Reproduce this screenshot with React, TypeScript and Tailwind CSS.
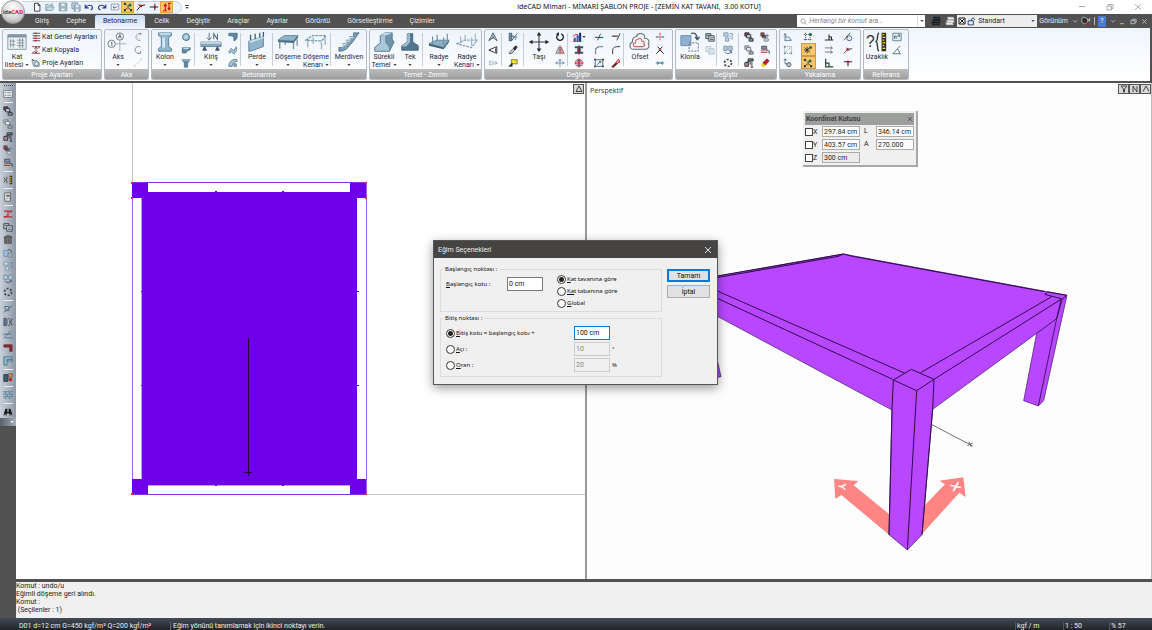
import React from "react";
import type { ReactNode } from "react";

const K = "#222a33";
const S = "#5f8aa6";
const R = "#c0161c";

const icons: Record<string, ReactNode> = {
  new: <path d="M3 1.500h4.500L9.500 4v7h-6.500zM7.300 1.500v2.700h2.200" fill="#fff" stroke={K} />,
  open: <path d="M1 10V3h3l1 1h4v2M1 10l2-4h8l-2 4zM7 2.500h3" fill="#cfe0ea" stroke="#7c98a8" />,
  save: <><path d="M1.500 1.500h9v9h-9z" fill="#a9bfcc" stroke="#7390a3" /><path d="M3.500 1.500h5v3.500h-5zM3.500 7.500h5v3h-5z" fill="#f3f7f9" stroke="#7390a3" strokeWidth=".6" /></>,
  saveall: <><path d="M1 1h7v7H1z" fill="#c2d2dc" stroke="#7390a3" /><path d="M4 4h7v7H4z" fill="#a9bfcc" stroke="#7390a3" /><path d="M6 4h3v2H6zM6 9h3v2H6z" fill="#fff" /></>,
  undo: <path d="M1.500 3v4h4M2 6.500C4 3.500 9 3 10 6c.5 1.500-.5 3-2 3.500" fill="none" stroke="#2a2f96" strokeWidth="1.300" />,
  redo: <path d="M10.500 3v4h-4M10 6.500C8 3.500 3 3 2 6c-.5 1.500.5 3 2 3.500" fill="none" stroke="#2a2f96" strokeWidth="1.300" />,
  refresh: <><path d="M1.500 2.500h9v7h-9z" fill="#fff" stroke="#7c8fa8" /><path d="M3.500 6.500l2-2M3.500 6.500l2 1.500M4 6.500h3.500L9 4.500" stroke="#4c5a9a" fill="none" /></>,
  nodes: <><path d="M2 2l4 3 4-3M6 5v5M2 10l4-4 4 4" stroke={K} fill="none" strokeDasharray="1.500 1" /><path d="M1 1h2.500v2.500H1zM1 8.500h2.500V11H1zM8.500 8.500H11V11H8.500z" fill="#2c3f2e" /><circle cx="8.500" cy="3.500" r="1.800" fill="#1c7048" /></>,
  perp: <><path d="M1 10l5-5.500 5-1M3 3l4 3" stroke={K} fill="none" strokeWidth="1.200" /><circle cx="6" cy="4.500" r="1.500" fill={R} /></>,
  mid: <><path d="M1 6h10M7 2v8" stroke={K} strokeWidth="1.200" /><circle cx="7" cy="6" r="1.500" fill={R} /></>,
  near: <><path d="M1 10l5-5 5-.5M4 3.500l4 3" stroke={K} fill="none" /><circle cx="5.500" cy="5.500" r="1.500" fill={R} /></>,
  ortho: <path d="M4 11V3M8.500 1v8M2.500 5L4 2.500 5.500 5M7 7l1.500 2.500L10 7M1 10.500h5M7 1.500h4" stroke={R} fill="none" strokeWidth="1.300" />,
  lines: <><path d="M2 1.500h9M2 4.500h9M2 7.500h9M2 10.500h9" stroke="#5b6066" strokeWidth="1.300" /><path d="M4 1.500h3M4 4.500h3M4 7.500h3M4 10.500h3" stroke={R} strokeWidth="1.300" /></>,
  story: <path d="M1 2h10M6 2v8M2 10h9M1 10l3-2M11 2L8 4M4 4.500l2-2 2 2M4 7.500l2 2 2-2" stroke="#8a3038" fill="none" />,
  project: <><path d="M1 3h6l3 3v4H3z" fill="#d6e2ea" stroke="#7491a2" /><circle cx="6.500" cy="7" r="2.500" fill="#e3edf3" stroke="#516d7e" /><path d="M1 1l3 3" stroke={K} /></>,
  axarc: <><path d="M9 2A4.200 4.200 0 1 0 9 10" fill="none" stroke="#8b98a2" /><path d="M5 6l4-4M5 6l4 4" stroke="#9aa7b0" strokeWidth=".7" strokeDasharray="1 1" /><circle cx="9" cy="2" r="1" fill="#64727e" /></>,
  axcurve: <path d="M9 2.500C5 0 1 4 3 8c1 2 4 3 6 1.500M9 7.500v2.500H6.500" fill="none" stroke="#717f8a" />,
  axline: <path d="M1 10l9-8M2 10h1M9 1h2" stroke="#b5bec5" strokeDasharray="3 1.500" />,
  circle: <><circle cx="6" cy="6" r="4" fill="#a9cade" stroke="#567a93" strokeWidth="1.300" /><path d="M4 8l4-4" stroke="#e4f0f7" /></>,
  poly: <><path d="M1.500 3h9.500v3L8 6.500 6 9.500H1.500z" fill={S} stroke="#3a5566" strokeWidth=".7" /><path d="M1.500 3h9.500L8 5H4z" fill="#bcd8e8" /></>,
  funnel: <><path d="M1 2h10L8 6v5H4V6z" fill={S} stroke="#3a5566" strokeWidth=".7" /><path d="M1.500 2h9v1h-9z" fill="#c4dce8" /></>,
  beamL: <path d="M1 1.500h10v4c0 3-2 5-4 5V7C7 5 5 4.500 1 4.500z" fill={S} stroke="#2f4e62" strokeWidth=".7" />,
  beamS: <path d="M1 8l3-4 3 3 3-5v5l-3 4-3-3-2 2z" fill="#a8c6d8" stroke="#48697f" strokeWidth=".8" />,
  beamC: <path d="M1 10C1 5 4 1.500 10 1.500L11 4C7 4 5 7 5 10zM7 7h3v3H7z" fill="#a8c6d8" stroke="#34556a" strokeWidth=".8" />,
  tri: <path d="M1 10.500L6 1l5 9.500-5-3.800zM3 8l5-2M6 3v4" fill="none" stroke="#365064" strokeWidth="1" />,
  eye: <><path d="M10.500 2L1 6l9.500 4z" fill="#fff" stroke="#333" strokeWidth="1.200" /><path d="M9 4v4" stroke="#333" /></>,
  spray: <path d="M1 4h3M1 6h3M1 8h3M5 6h6M9 4l2 2-2 2M5 3l2 2M5 9l2-2" stroke="#8ca0b4" fill="none" />,
  hatch: <><path d="M1.500 1.500v9h3v-9zM4.500 10L11 2M6 6h5M4 5h3" fill="#7895ab" stroke="#33506a" strokeWidth="1" /><circle cx="9" cy="8.500" r="1" fill={S} /></>,
  dropper: <><path d="M1.500 10.500l1-2.500 4-4 2 2-4 4z" fill="#c0cdd5" stroke={K} strokeWidth=".8" /><path d="M6.500 3.500l3-2.500L11 2.500 8.500 6z" fill={K} stroke={K} /></>,
  tag: <><path d="M4 2h7v5H4z" fill="#f4e51a" stroke="#333" strokeWidth=".7" /><path d="M1 10l4-4v4z" fill={K} stroke={K} strokeWidth=".7" /></>,
  rotate: <><path d="M7.500 2.200A4 4 0 1 1 4 2.500" fill="none" stroke="#16191c" strokeWidth="1.500" /><path d="M4.500 0v5L1.500 2.500z" fill="#16191c" /></>,
  mirror: <><path d="M5 2v8H1z" fill="#cfd6da" stroke="#494f54" strokeWidth=".8" /><path d="M7 2v8h4z" fill="#e8b7b5" stroke="#6b3336" strokeWidth=".8" /><path d="M6 0v12" stroke={R} strokeWidth=".6" /></>,
  stretch: <path d="M1 6h10M6 1v10M4 4l2-2 2 2M3 4.500L1 6l2 1.500M9 4.500L11 6 9 7.500" stroke="#5f87a4" fill="none" />,
  bars: <><path d="M2 7h2.500v4H2zM5.500 4H8v7H5.500z" fill="#3b4bb0" /><path d="M8.500 1H11v10H8.500z" fill="#242a6a" /><path d="M1 5l3-2h3M1 11.500h10" stroke={R} fill="none" /></>,
  ibeam: <><path d="M1 1.500h10v2.500H8v4h3v2.500H1V8h3V4H1z" fill="#2f5164" /><path d="M6 0v12M4 6h4" stroke={R} strokeWidth="1.100" /></>,
  globe: <><circle cx="6" cy="6" r="4.500" fill="#f3dede" stroke={R} strokeDasharray="2 1" /><path d="M6 1v10M1 6h10" stroke={R} strokeWidth="1.400" /><path d="M3 8.500h6M3 3.500h6" stroke="#2a3f92" /></>,
  trim: <><path d="M1 6.500h10M8 2L4 10" stroke={K} /><path d="M6 6.500h5" stroke={R} strokeWidth="1.300" /></>,
  extend: <><path d="M1 5h8M11 1.500L7 10" stroke={K} /><path d="M2 5h5" stroke={R} /></>,
  fillet: <path d="M2 11V5.500C2 3 4 2 11 2M2 5l3-3" fill="none" stroke="#4c5960" />,
  chamfer: <path d="M2 11V6C2 3.500 4.500 2 7 2h4" fill="none" stroke="#3d474e" strokeWidth="1.200" />,
  scale: <><path d="M1.500 2h9v8h-9z" fill="#eef3f7" stroke="#42596b" /><path d="M4 8l4-4M6 4h2v2" fill="none" stroke="#42596b" /><path d="M0 1h2.500v2H0zM9.500 1H12v2H9.500zM0 9h2.500v2H0zM9.500 9H12v2H9.500z" fill="#42596b" /></>,
  wand: <><path d="M1 10.500l5-5 1.500 1.500-5 4.500z" fill="#7e1116" stroke="#5b1014" strokeWidth=".8" /><path d="M6 5l3-3 1.500 1.500-3 3.500zM9 1v1.500M11 5H9.500" stroke={R} fill="#d8b3b2" /></>,
  burst: <><path d="M1 6h3.500M7.500 6H11" stroke={K} /><path d="M6 1v3M6 8v2" stroke={R} /><circle cx="6" cy="6" r="1" fill={R} /></>,
  cross: <><path d="M1.500 10.500L6 6l4.500 4.500M3 2l3 3 3-3" stroke={K} fill="none" strokeWidth="1.200" /><path d="M4 6h4" stroke={R} strokeWidth="1.300" /></>,
  join: <><path d="M1 6h10" stroke="#32626d" /><path d="M3 4l2 2-2 2M9 4L7 6l2 2" fill="#3c8a98" stroke="#3c8a98" /></>,
  copy: <><path d="M1 2h6v6H1z" fill="#c5cdd4" stroke="#29333b" /><path d="M4.500 4.500H11v6.500H4.500z" fill="#dde4ea" stroke="#29333b" /><path d="M6 7h4M6 9h4M2 4h3" stroke="#29333b" strokeWidth=".8" /></>,
  copyd: <><path d="M1 2h6v6H1z" fill="#e2eaf0" stroke="#b3c2cd" /><path d="M4.500 4.500H11v6.500H4.500z" fill="#d8e3ea" stroke="#b3c2cd" /></>,
  arr1: <><path d="M1 1h5v4H1zM3 7h4v4H3z" fill="#c4d8e6" stroke="#7894a8" /><path d="M8 2h3v6M9 7l2 2M7 4l2 2" stroke="#6a879c" fill="none" /></>,
  arr2: <><path d="M1 1.500h4v5H1zM7 1.500h4v5H7z" fill="#b8d0e0" stroke="#6a8aa2" /><path d="M2 8c2 3 6 3 8 0M8 8h2v2" fill="none" stroke="#3b566c" /></>,
  ring: <circle cx="6" cy="6" r="4.200" fill="none" stroke="#3d4347" strokeWidth="2" strokeDasharray="2.400 2" />,
  stk1: <><path d="M1 1h5v4H1z" fill="#8f474d" stroke={K} /><path d="M3 3h5v4H3z" fill="#b9c4cb" stroke={K} /><path d="M6 8h5v3H6zM8.500 5.500V8" fill="#8d99a2" stroke={K} /></>,
  stk2: <><path d="M1 1h5v4H1z" fill="#c2c9cd" stroke="#6c767c" /><path d="M3 3h5v4H3z" fill="#e4e8ea" stroke="#6c767c" /><path d="M6 8h5v3H6zM8.500 5.500V8" fill="#a9b2b8" stroke="#5d666c" /></>,
  stk3: <><path d="M5 1h6v2.500H5z" fill="#75828c" stroke={K} /><path d="M1 5.500h4.500V10H1z" fill="#c3828a" stroke={K} /><path d="M3 4.500h4.500V8" fill="none" stroke={K} /><path d="M9.500 4v7M8 11h3" stroke={K} fill="none" /></>,
  stk4: <><path d="M1 1h4v4H1zM3 4h4v3H3z" fill="#9b4a4f" stroke="#3a3a3a" strokeWidth=".8" /><path d="M8.500 2v5M6 4.500h5" stroke="#4a7c96" /><path d="M5 8h5v3H5z" fill="#cfd8de" stroke="#77858f" /></>,
  stk5: <><path d="M2 1.500h6V5H2z" fill="#7d95bb" stroke="#444" /><path d="M1 7h8M1 9h8" stroke="#93452e" /><path d="M8 5.500l3 2v3" stroke={K} fill="none" /></>,
  eraser: <><path d="M1 8l3-3 3 3-2 3H3z" fill="#f2d321" /><path d="M3.500 5.500L8.500 1 11 3.500 6.500 8.500z" fill="#c2181e" stroke="#7c0c10" strokeWidth=".7" /></>,
  sn1: <path d="M2.500 11V2M1 4l1.500-2L4 4M2.500 6H7l3 4H2.500" fill="none" stroke="#3e6a80" />,
  sn2: <><path d="M2 2h8v8H2zM2 10l8-8" fill="none" stroke="#7f99aa" strokeDasharray="1.500 1" /><path d="M1 1h2v2H1zM9 9h2v2H9zM1 9h2v2H1z" fill="#68899e" /></>,
  sn3: <><path d="M2.500 1v6h3M1 3l1.500-2L4 3" stroke="#3e6a80" fill="none" /><circle cx="7" cy="8" r="2.500" fill="#b9cad6" stroke="#3a4e5c" /></>,
  grid: <><path d="M1 3h10M1 9h10M3 1v10M8.500 1v10" stroke="#3b4a44" strokeDasharray="1.500 1" /><circle cx="9" cy="3" r="1.800" fill="#1c7048" /></>,
  star: <><path d="M2 3l6 6M2 9l6-6M5 2v8M1 6h7" stroke={K} /><circle cx="9" cy="3" r="1.800" fill="#1c7048" /></>,
  base: <path d="M1 9.500h10M6 3v6M6 6h3v3" stroke={K} fill="none" strokeWidth="1.300" />,
  arrows: <path d="M1 3.500h9M8 1.500l2 2-2 2M1 8.500h9M8 6.500l2 2-2 2" stroke="#555f66" fill="none" />,
  corner: <path d="M2 1v9.500h9M2 6h4v4" stroke="#2a4a42" fill="none" strokeWidth="1.500" />,
  tangent: <><circle cx="7.500" cy="7.500" r="3" fill="none" stroke="#3a5080" /><path d="M1 10L8.500 1" stroke="#3a5080" /><circle cx="5" cy="5.500" r="1" fill={R} /></>,
  tee: <><path d="M1 4.500h10M6 4.500V10" stroke={K} strokeWidth="1.300" /><circle cx="6" cy="4.500" r="1.500" fill={R} /></>,
  dim: <><path d="M1 1.500h10v9H1z" fill="#e4edf3" stroke="#54738a" /><path d="M3 8V5h2v3M6.500 6L9 3.500M7 3.500h2v2" stroke="#3c5b70" fill="none" /></>,
  angle: <path d="M1 10.500h10M1 10.500L10 1M6 5c2 1 3 3 3 5" fill="none" stroke="#44606f" />,
  list: <><path d="M.5 2h11v8H.5z" fill="#f2f4f5" stroke="#6b737c" /><path d="M2 4.500h2M2 7.500h2" stroke="#3a5e94" /><path d="M5 4.500h5M5 7.500h5" stroke="#777" /></>,
  ruler: <><path d="M8 1h3v10H8z" fill="#3b351c" /><path d="M8 3h2M8 5h2M8 7h2M8 9h2" stroke="#e7cf2d" /><path d="M1 3l2 3-2 3M4 2c2 2 0 3 0 4s2 2 0 4" stroke="#333" fill="none" /></>,
  sheet: <><path d="M2 1h7v10H2z" fill="#e9ebec" stroke="#555" /><path d="M4 3h4v3H4z" fill="#6f777c" /><path d="M4 8h1.500M7 8h1.500" stroke="#444" /></>,
  redh: <path d="M1 2.500h10M1 9.500h10M6 2.500v7M1 10l4-2M11 2L8 5" stroke={R} fill="none" strokeWidth="1.200" />,
  bucket: <path d="M2 3h8v7H2zM1 3l3-2h5l2 2M4 5v4M7 5v4" fill="#777" stroke="#4b4b4b" />,
  clone: <><path d="M1 3h5v7H1z" fill="#9fc0d8" stroke="#6b91ad" /><path d="M6 6h5v5H6z" fill="none" stroke="#666" strokeDasharray="1 1" /><path d="M6 2c3-1 4 1 4 3" stroke="#314a62" fill="none" /></>,
  slope: <path d="M1 10L11 2M2 3h5v5H3z" fill="#a9c4d8" stroke="#42647c" />,
  panels: <><path d="M1 1.500h3v9H1z" fill="#5a7d96" stroke={K} strokeWidth=".6" /><path d="M6 2h2v8H6z" fill="#e8eef2" stroke={K} strokeWidth=".7" /><path d="M11 2L9 6l2 4" stroke={K} fill="none" /></>,
  split: <path d="M1 10L9 1M0 5h11M3 9.500h9" stroke="#40708c" fill="none" />,
  redl: <path d="M1 2h10v8H8V5H1z" fill="#8d2b30" stroke="#5d1519" strokeWidth=".6" />,
  bluel: <path d="M1 1h10v3H5v7H1zM5 5l3 3M7 5h4v3" fill="#8db9ca" stroke="#2d647c" strokeWidth=".8" />,
  boxes: <><path d="M1 2h5v8H1z" fill="#3f6074" stroke={K} /><path d="M7 1h4v4H7z" fill="#dca53a" stroke={K} strokeWidth=".6" /><circle cx="9" cy="8" r="2" fill={R} /></>,
  brick: <path d="M0 2h12M0 5h12M0 8h12M3 2v3M8 2v3M5 5v3M10 5v3M3 8v3M8 8v3" stroke="#5f87a4" fill="none" strokeWidth="1.300" />,
  bino: <><path d="M3 2h2.200v4H6.800V2H9l2.500 8H7.500V7.500h-3V10H.5z" fill="#171717" /><circle cx="2.500" cy="9" r=".8" fill="#aaa" /><circle cx="9.500" cy="9" r=".8" fill="#aaa" /></>,
  layers: <path d="M3 1.500h7l1 2.500H4zM2 5h8l1 2.500H3zM1 8h8l1 2.500H2z" fill="#f0f0f0" stroke="#c8c8c8" strokeWidth=".8" />,
  layersd: <path d="M3 1.500h7l1 2.500H4zM2 5h8l1 2.500H3zM1 8h8l1 2.500H2z" fill="#39414b" stroke="#14181c" strokeWidth="1.100" />,
  xbox: <path d="M1.500 1.500h9v9h-9zM3 3l6 6M9 3L3 9" fill="#fff" stroke="#111" strokeWidth="1.500" />,
  lock: <><path d="M1.500 5h7v5.500h-7z" fill="#dfeaf5" stroke="#223a66" strokeWidth="1.200" /><path d="M6 5V3c0-2 4-2 4 0v1" fill="none" stroke="#223a66" strokeWidth="1.200" /></>,
  cam: <><path d="M1 2.500l3-1 4 2v4l-4 2-3-2z" fill="#2c2c2c" stroke="#d9d9d9" strokeWidth=".8" /><path d="M8 5l3-3v5z" fill="#b9b9b9" /><path d="M6 7l3 4" stroke={R} strokeWidth="1.500" /></>,
};

const big: Record<string, ReactNode> = {
  table: <><path d="M2 3h20v16H2z" fill="#eef2f4" stroke="#8296a4" /><path d="M2 3h20v3H2z" fill="#7d95a6" /><path d="M12 9h8M12 12h8M12 15h8M15 7v11M18 7v11M4 10h6M4 14h6M5 8v9M8 8v9" stroke="#7b8d9a" fill="none" strokeWidth=".9" /></>,
  axes: <><circle cx="14" cy="5" r="4" fill="none" stroke="#687680" /><circle cx="5" cy="13" r="4" fill="none" stroke="#687680" /><path d="M9 13h12M14 9v12" stroke="#9aa8b2" /><path d="M12.300 7L14 2.800 15.700 7M13 5.500h2M4.200 12L5.300 11v4.500" stroke="#4d5a64" fill="none" strokeWidth=".9" /></>,
  column: <><path d="M5 1h14v3l-3 2v10l3 2v3H5v-3l3-2V6L5 4z" fill="#8fb6cd" stroke="#5b7e93" /><path d="M9 6h3v11H9z" fill="#d5e8f2" /><path d="M5 1h14l-2 2H7z" fill="#c4dce9" /></>,
  beam: <><path d="M1 11h22v5H1z" fill="#86a9c0" stroke="#4f6f84" strokeWidth=".8" /><path d="M1 11h22v2H1z" fill="#c4d9e5" /><path d="M3 20l2-4 2 4zM17 20l2-4 2 4z" fill="#42566a" stroke="#42566a" /><path d="M10 1v8M7.500 6l2.500 3 2.500-3" fill="none" stroke="#58717f" /><path d="M15 8V2l4 6V2" fill="none" stroke="#4d6674" strokeWidth="1.100" /></>,
  wall: <><path d="M3 10l16-5v11L5 21H3z" fill="#8fb4cb" stroke="#4d7089" strokeWidth=".8" /><path d="M3 10l2 2 14-5V5z" fill="#c6dde9" /><path d="M5 9V3M10 8V2M15 6V1M19 5V0" stroke="#3e5c70" strokeWidth="1.400" /></>,
  slab: <><path d="M3 10v8M18 11v8M22 8v7M9 10v4" stroke="#7f9caf" strokeWidth="1.600" /><path d="M1 9l7-5h15l-5 6z" fill="#8fb3c8" stroke="#54778d" strokeWidth=".8" /><path d="M1 9l17 1 5-6v2l-5 6-17-1z" fill="#4c6c82" /></>,
  slabe: <><path d="M1 9l7-5h15l-5 6z" fill="none" stroke="#7795a8" strokeDasharray="3 1" strokeWidth="1.500" /><path d="M3 10v7M18 11v8M22 7v7M9 6v7" stroke="#9db4c2" strokeWidth="1.500" /></>,
  stair: <><path d="M1 21v-4h4v-4h4V9h4V5h4V1h6l-7 10-7 8-5 2z" fill="#7d9db2" stroke="#486679" strokeWidth=".8" /><path d="M5 17v-3h4M9 13v-3h4M13 9V6h4" stroke="#d0e1eb" fill="none" strokeWidth="1.500" /></>,
  strip: <><path d="M8 4l5-3h8v7l2 3-5 10H2v-4l6-5z" fill="#6e93ab" stroke="#47687e" strokeWidth=".8" /><path d="M8 4h6v7l4 6v4H2v-4l6-5z" fill="#a9c7d9" stroke="#5b7d93" strokeWidth=".8" /><path d="M8 4l5-3h8l-7 3z" fill="#c9dde8" /></>,
  single: <><path d="M9 2h6v9l6 4v5H3v-5l6-4z" fill="#527791" stroke="#365568" strokeWidth=".8" /><path d="M9 2h3v9l-4 5H3v-1l6-4z" fill="#9dbed2" /></>,
  raft: <><path d="M1 13l8-4h14l-6 8z" fill="#8bb0c6" stroke="#4e7189" strokeWidth=".8" /><path d="M1 13l16 4v2L1 15zM17 19l6-8V9l-6 8z" fill="#426075" /><path d="M5 13V5M10 10V3M17 15V6M21 9V2" stroke="#6f8fa3" strokeWidth="1.300" /></>,
  rafte: <><path d="M1 13l8-4h14l-6 8z" fill="none" stroke="#86a3b5" strokeDasharray="3 1" strokeWidth="1.400" /><path d="M5 13V5M10 10V3M17 15V6M21 9V2" stroke="#9fb5c3" strokeWidth="1.300" /></>,
  move: <><path d="M12 3v17M3 11h18" stroke="#32383d" strokeWidth="1.200" /><path d="M12 0l2.500 4h-5zM12 22l2.500-4h-5zM1 11l4-2.500v5zM23 11l-4-2.500v5z" fill="#23282c" /></>,
  offset: <><path d="M5 19C0 19 0 12 4 11 3 7 6 5 8 5c2-5 10-4 9 2 4 0 6 3 4 6 2 3 0 6-3 6z" fill="#f5f6f8" stroke="#616b74" strokeWidth="1.100" /><path d="M7 16c-3 0-3-4 0-4 0-3 2-4 3-4 1-2 4-1 4 2 3 0 3 2 2 3 2 1 1 3-1 3z" fill="#fdf6f6" stroke="#c4666a" strokeWidth="1.200" /></>,
  cloneb: <><path d="M2 4h11v11H2z" fill="#8fb0cf" stroke="#6c8fb2" /><path d="M11 12h10v9H11z" fill="none" stroke="#7b8793" strokeDasharray="2 1.500" strokeWidth="1.300" /><path d="M13 2c4-2 7 1 7 6M17.500 5.500L20 8.500l2.500-3" fill="none" stroke="#3b5069" strokeWidth="1.400" /></>,
  far: <><text x="0" y="17" fontSize="17" fontFamily="Liberation Sans" fill="#333">?</text><path d="M14 1c-3 3 0 7-3 9.500C14 13 11 18 14 21" fill="none" stroke="#333" strokeWidth="1.500" /><path d="M17 1h5v20h-5z" fill="#2d2c22" /><path d="M18 3h2M18 6h3M18 9h2M18 12h3M18 15h2M18 18h3" stroke="#f3dc2c" strokeWidth="1.400" /></>,
};

function Icon({ n }: { n: string }) {
  return <svg viewBox="0 0 12 12" className="size-[10px] shrink-0" aria-hidden="true">{icons[n]}</svg>;
}

function Caret({ color = "#444" }: { color?: string }) {
  return <svg viewBox="0 0 5 3" className="h-[2px] w-[4px] shrink-0" aria-hidden="true"><path d="M0 0h5L2.500 3z" fill={color} /></svg>;
}

function Big({ icon, lines, w, caret = true }: { icon: string; lines: string[]; w: string; caret?: boolean }) {
  const two = lines.length > 1;
  return (
    <button className={`flex shrink-0 flex-col items-center pt-px ${w}`}>
      <svg viewBox="0 0 24 22" className="h-[22px] w-[22px] shrink-0" aria-hidden="true">{big[icon]}</svg>
      <span className="leading-[8px] whitespace-nowrap">{lines[0]}</span>
      <span className="flex h-[8px] items-center gap-[2px] leading-[8px] whitespace-nowrap">
        {two && lines[1]}
        {caret && <Caret />}
      </span>
    </button>
  );
}

function Smalls({ names, w, active = [], caret = false }: { names: string[]; w: string; active?: number[]; caret?: boolean }) {
  return (
    <div className={`flex shrink-0 flex-col items-center ${w}`}>
      {names.map((n, i) => (
        <button
          key={n}
          aria-label={n}
          className={`flex h-[13px] w-[15px] items-center justify-center ${active.includes(i) ? "border border-[#c59a4a] bg-[#fbc56b]" : ""}`}
        >
          <Icon n={n} />
          {caret && i === 0 && <Caret />}
        </button>
      ))}
    </div>
  );
}

function Divider() {
  return <div className="w-[2px] shrink-0 py-[3px]"><div className="h-full w-px bg-[#c5ccd4]" /></div>;
}

function Group({ title, w, children }: { title: string; w: string; children: ReactNode }) {
  return (
    <section className={`flex shrink-0 flex-col overflow-hidden rounded-[2px] border border-[#b4bac2] bg-linear-to-b from-[#eef4fc] to-white ${w}`}>
      <div className="flex h-[40px]">{children}</div>
      <h2 className="h-[10px] bg-linear-to-b from-[#bcbcbc] to-[#9e9e9e] pt-px text-center leading-[10px] text-white">{title}</h2>
    </section>
  );
}

function Ribbon() {
  return (
    <div className="flex h-[53px] shrink-0 gap-[2px] border-r-2 border-[#515151] bg-linear-to-b from-[#f0f5fd] to-white px-[2px] py-px text-[#1e1e3c]">
      <Group title="Proje Ayarları" w="w-[100px]">
        <Big icon="table" lines={["Kat", "listesi"]} w="w-[28px]" />
        <div className="flex flex-col">
          {[["lines", "Kat Genel Ayarları"], ["story", "Kat Kopyala"], ["project", "Proje Ayarları"]].map(([n, t]) => (
            <button key={t} className="flex h-[13px] items-center gap-px whitespace-nowrap"><Icon n={n} />{t}</button>
          ))}
        </div>
      </Group>
      <Group title="Aks" w="w-[45px]">
        <Big icon="axes" lines={["Aks"]} w="w-[26px]" />
        <Smalls names={["axarc", "axcurve", "axline"]} w="w-[14px]" />
      </Group>
      <Group title="Betonarme" w="w-[216px]">
        <Big icon="column" lines={["Kolon"]} w="w-[26px]" />
        <Smalls names={["circle", "poly", "funnel"]} w="w-[16px]" />
        <Divider />
        <Big icon="beam" lines={["Kiriş"]} w="w-[30px]" />
        <Smalls names={["beamL", "beamS", "beamC"]} w="w-[14px]" />
        <Divider />
        <Big icon="wall" lines={["Perde"]} w="w-[30px]" />
        <Divider />
        <Big icon="slab" lines={["Döşeme"]} w="w-[28px]" />
        <Big icon="slabe" lines={["Döşeme", "Kenarı"]} w="w-[28px]" />
        <Divider />
        <Big icon="stair" lines={["Merdiven"]} w="w-[34px]" />
      </Group>
      <Group title="Temel - Zemin" w="w-[113px]">
        <Big icon="strip" lines={["Sürekli", "Temel"]} w="w-[28px]" />
        <Big icon="single" lines={["Tek"]} w="w-[24px]" />
        <Divider />
        <Big icon="raft" lines={["Radye"]} w="w-[30px]" />
        <Big icon="rafte" lines={["Radye", "Kenarı"]} w="w-[26px]" />
      </Group>
      <Group title="Değiştir" w="w-[189px]">
        <Smalls names={["tri", "eye", "spray"]} w="w-[16px]" />
        <Divider />
        <Smalls names={["hatch", "dropper", "tag"]} w="w-[20px]" />
        <Divider />
        <Big icon="move" lines={["Taşı"]} w="w-[28px]" caret={false} />
        <Smalls names={["rotate", "mirror", "stretch"]} w="w-[14px]" />
        <Divider />
        <Smalls names={["bars", "ibeam", "globe"]} w="w-[20px]" caret />
        <Smalls names={["trim", "fillet", "scale"]} w="w-[20px]" />
        <Smalls names={["extend", "chamfer", "wand"]} w="w-[14px]" />
        <Divider />
        <Big icon="offset" lines={["Ofset"]} w="w-[30px]" caret={false} />
        <Smalls names={["burst", "cross", "join"]} w="w-[10px]" />
      </Group>
      <Group title="Değiştir" w="w-[102px]">
        <Big icon="cloneb" lines={["Klonla"]} w="w-[28px]" caret={false} />
        <Smalls names={["copy", "copyd"]} w="w-[12px]" />
        <Divider />
        <Smalls names={["arr1", "arr2", "ring"]} w="w-[20px]" />
        <Divider />
        <Smalls names={["stk1", "stk2", "stk3"]} w="w-[18px]" />
        <Smalls names={["stk4", "stk5", "eraser"]} w="w-[14px]" />
      </Group>
      <Group title="Yakalama" w="w-[82px]">
        <Smalls names={["sn1", "sn2", "sn3"]} w="w-[16px]" />
        <Smalls names={["grid", "star", "nodes"]} w="w-[24px]" active={[1, 2]} />
        <Smalls names={["base", "arrows", "corner"]} w="w-[18px]" />
        <Smalls names={["tangent", "near", "tee"]} w="w-[20px]" />
      </Group>
      <Group title="Referans" w="w-[46px]">
        <Big icon="far" lines={["Uzaklık"]} w="w-[26px]" caret={false} />
        <Smalls names={["dim", "angle"]} w="w-[14px]" />
      </Group>
    </div>
  );
}

function TitleBar() {
  const quick = ["new", "open", "save", "saveall", "undo", "redo", "refresh", "nodes", "perp", "mid", "ortho"];
  return (
    <header className="flex h-[14px] shrink-0 items-center bg-white">
      <div className="ml-[22px] flex h-[13px] items-center rounded-r-full border border-l-0 border-[#c9d3e2] bg-[#edf3fb] pr-[8px] pl-[8px]">
        {quick.map((n) => (
          <button key={n} aria-label={n} className={`flex h-[12px] w-[13px] items-center justify-center ${n === "nodes" || n === "ortho" ? "border border-[#d9a441] bg-[#fbc56b]" : ""}`}><Icon n={n} /></button>
        ))}
      </div>
      <button aria-label="Özelleştir" className="flex w-[10px] flex-col items-center gap-px"><span className="h-px w-[4px] bg-[#555]" /><Caret /></button>
      <h1 className="flex-1 pl-[18px] text-center font-['Noto_Sans',sans-serif] leading-[14px] whitespace-pre text-[#111]">ideCAD Mimari - MİMARİ ŞABLON PROJE - [ZEMİN KAT TAVANI,  3.00 KOTU]</h1>
      <div className="flex">
        {["M1 3.500h6", "M1 3h4.500v4H1zM2.500 3V1.500H7V5.500H5.500", "M1 1l6 6M7 1L1 7"].map((d, i) => (
          <button key={d} aria-label={["Simge durumu", "Geri yükle", "Kapat"][i]} className="flex h-[14px] w-[28px] items-center justify-center">
            <svg viewBox="0 0 8 8" className="size-[8px]"><path d={d} fill="none" stroke="#999" strokeWidth=".8" /></svg>
          </button>
        ))}
      </div>
    </header>
  );
}

function TabBar() {
  const tabs = ["Giriş", "Cephe", "Betonarme", "Celik", "Değiştir", "Araçlar", "Ayarlar", "Görüntü", "Görselleştirme", "Çizimler"];
  return (
    <nav className="flex h-[14px] shrink-0 items-end bg-[#515151] pl-[27px] text-[#e6e6e6]">
      <div className="flex gap-px">
        {tabs.map((t) => (
          <button key={t} className={`h-[13px] px-[8px] leading-[13px] ${t === "Betonarme" ? "rounded-t-[2px] bg-linear-to-b from-[#cddcf5] to-[#eef4fd] text-[#1e1e3c]" : ""}`}>{t}</button>
        ))}
      </div>
      <div className="ml-auto flex h-[14px] items-center">
        <label className="flex h-[12px] w-[128px] items-center bg-white pl-[3px]">
          <svg viewBox="0 0 8 8" className="size-[7px]"><circle cx="3.500" cy="3.500" r="2.500" fill="none" stroke="#888" strokeWidth=".8" /><path d="M5.500 5.500L7.500 7.500" stroke="#888" /></svg>
          <input aria-label="Komut ara" placeholder="Herhangi bir komut ara..." className="min-w-0 flex-1 pl-[2px] italic outline-none placeholder:text-[#888]" />
          <span className="flex h-full w-[8px] items-center justify-center border-l border-[#ddd]"><Caret /></span>
        </label>
        <button aria-label="Katmanlar" className="ml-[4px] flex w-[14px] justify-center"><Icon n="layersd" /></button>
        <button aria-label="Katman listesi" className="flex w-[14px] justify-center"><Icon n="layers" /></button>
        <div className="flex h-[12px] w-[80px] items-center gap-px bg-[#ededed] pl-px text-[#1e1e3c]">
          <svg viewBox="0 0 12 12" className="size-[8px]">{icons.xbox}</svg>
          <svg viewBox="0 0 12 12" className="size-[9px]">{icons.lock}</svg>
          <select aria-label="Katman" className="h-full flex-1 appearance-none pl-px outline-none"><option>Standart</option></select>
          <span className="mr-[2px]"><Caret /></span>
        </div>
        <button className="flex items-center gap-[5px] pl-[2px] whitespace-nowrap">Görünüm<svg viewBox="0 0 6 4" className="h-[3px] w-[4px]"><path d="M0 0l3 3 3-3" fill="none" stroke="#ddd" /></svg></button>
        <button aria-label="Kamera" className="ml-[4px]"><Icon n="cam" /></button>
        <span className="mx-[3px] h-[8px] w-px bg-[#bbb]" />
        <button aria-label="Yardım" className="h-[11px] w-[8px] bg-[#4a78d8] text-white">?</button>
        <svg viewBox="0 0 6 4" className="ml-[5px] h-[3px] w-[4px]"><path d="M0 0l3 3 3-3" fill="none" stroke="#ddd" /></svg>
        <div className="ml-[4px] flex">
          {["M1 6.500h5", "M1 3h4.500v3.500H1zM2.500 3V1.500H7V5H5.500", "M1.500 1.500l5 5M6.500 1.500l-5 5"].map((d, i) => (
            <button key={d} aria-label={["Küçült", "Eski boyut", "Belgeyi kapat"][i]} className="w-[11px]"><svg viewBox="0 0 8 8" className="size-[7px]"><path d={d} fill="none" stroke="#b9c4cf" /></svg></button>
          ))}
        </div>
      </div>
    </nav>
  );
}

const tools = ["list", "|", "stk1", "stk2", "stk3", "stk4", "stk5", "|", "ruler", "|", "sheet", "|", "redh", "copy", "bucket", "clone", "arr1", "arr2", "ring", "|", "slope", "panels", "split", "redl", "bluel", "|", "boxes", "|", "brick", "|", "bino"];

function Toolbar() {
  return (
    <aside className="w-[16px] shrink-0 bg-[#515151]">
      <div className="flex flex-col items-center bg-linear-to-r from-[#c9d0da] to-[#8e98a6] pt-[2px]">
        <span className="mb-px w-[9px] border-t border-dotted border-[#444]" />
        {tools.map((n, i) =>
          n === "|" ? (
            <span key={i} className="flex h-[4px] w-[9px] items-center"><span className="h-px w-full bg-[#eceff2]" /></span>
          ) : (
            <button key={i} aria-label={n} className="flex h-[13px] w-full items-center justify-center"><Icon n={n} /></button>
          ),
        )}
      </div>
      <div className="flex h-[8px] items-center justify-end bg-linear-to-r from-[#59616b] to-[#a3acb8] pr-[2px]"><Caret color="#fff" /></div>
    </aside>
  );
}

function PaneButton({ d, label }: { d: string; label: string }) {
  return (
    <button aria-label={label} className="flex h-[10px] w-[11px] items-center justify-center border border-[#555] bg-[#d9d9d9]">
      <svg viewBox="0 0 8 8" className="size-[8px]"><path d={d} fill="none" stroke="#333" strokeWidth=".9" /></svg>
    </button>
  );
}

function PlanView() {
  const corners = [[132, 183], [350, 183], [132, 479], [350, 479]];
  const reds = [[132, 183], [366, 183], [132, 198], [366, 198], [132, 494], [366, 494]];
  const ticks = [[215, 191], [282, 191], [215, 485], [282, 485], [141, 291], [357, 291], [141, 385], [357, 385]];
  return (
    <section className="relative min-w-0 overflow-hidden bg-white">
      <svg className="block h-full w-full" role="img" aria-label="Kat planı">
        <g transform="translate(-16 -83)">
          <path d="M132.500 83v100M367 494.500h900" stroke="#c8c8c8" />
          <path d="M132.500 182.500h234v312h-234z" fill="#fff" stroke="#a15cf0" />
          <path d="M142 192h215v293H142z" fill="#6d00e8" />
          <path d="M141.500 198v281M148 485.500h202" stroke="#c59cf5" />
          {corners.map(([x, y]) => <rect key={`${x}-${y}`} x={x} y={y} width="16" height={y < 200 ? 15 : 16} fill="#6d00e8" />)}
          <path d="M132 182.500h235M132 494.500h235" stroke="#8a2cf0" />
          {ticks.map(([x, y]) => <rect key={`${x}-${y}`} x={x} y={y} width="2" height="1" fill="#4a00a0" />)}
          {reds.map(([x, y]) => <rect key={`${x}-${y}`} x={x - 1} y={y - 1} width="2" height="2" fill="#f0204a" />)}
          <path d="M248.500 338v138M244 472.500h8" stroke="#1c1038" />
        </g>
      </svg>
      <div className="absolute top-px right-px"><PaneButton d="M1 6.500L4 1l3 5.500z" label="Büyüt" /></div>
    </section>
  );
}

function PerspectiveView() {
  return (
    <section className="relative min-w-0 overflow-hidden border-r border-[#bbb] bg-[#fdfdfd]">
      <svg className="block h-full w-full" role="img" aria-label="Perspektif görünüm">
        <g transform="translate(123 157) scale(.33333)" strokeLinejoin="round">
          <path d="M372 717l73 6-14 13 106 86v62L394 765l-18 12zM760 712l-72 10 17 11-62 64-7 85 112-124 19 13z" fill="#ff8585" />
          <text x="397" y="740" fontSize="32" fontWeight="700" fontFamily="Liberation Sans" fill="#fff" textAnchor="middle" dominantBaseline="central" transform="rotate(95 397 740)">Y</text>
          <text x="736" y="740" fontSize="38" fontWeight="700" fontFamily="Liberation Sans" fill="#fff" textAnchor="middle" dominantBaseline="central" transform="rotate(65 736 740)">X</text>
          <path d="M-20 116L400 42l671 124-70 316-16 16-44-16 39-202-312 228-32 376-44 46-55-46 9-374L22 229l-42-21z" fill="#b847ff" stroke="#3b1160" strokeWidth="2" />
          <path d="M0 300l24 70 9 40-33 6z" fill="#b847ff" stroke="#3b1160" strokeWidth="2" />
          <g fill="none" stroke="#2e0b4c" strokeWidth="3">
            <path d="M-20 120L385 49l15-7 28 7 576 106M22 108L400 42M1015 156l56 10-14 11-53-14 11-8" />
            <path d="M1025 170L632 398M1053 178L672 418M22 153l561 246M22 175l526 243" />
            <path d="M604 388l68 30-52 34-70-32zM550 420l-4 90-9 374M620 452l-28 478M672 418l-4 90-32 376" />
            <path d="M1057 177l-17 59-55 262M1053 178l-13 58-60 44" strokeWidth="2.500" />
          </g>
          <path d="M664 553l124 65M772 617l16-8M776 605l8 16" stroke="#555" strokeWidth="2.500" fill="none" />
        </g>
      </svg>
      <h2 className="absolute top-[3px] left-[3px] font-['Noto_Sans',sans-serif] leading-[9px] text-[#444]">Perspektif</h2>
      <div className="absolute top-px right-0 flex">
        <PaneButton d="M1 1h6L4.500 4v3h-1V4z" label="Süz" />
        <PaneButton d="M2 7V1l4 6V1" label="Kuzey" />
        <PaneButton d="M1 6.500L4 1l3 5.500" label="Büyüt" />
      </div>
    </section>
  );
}

function Coordinates() {
  const field = "h-[11px] w-full min-w-0 border border-[#aaa] px-px leading-[9px] outline-none";
  const rows: [string, string, string, string][] = [["X", "297.84 cm", "L", "346.14 cm"], ["Y", "403.57 cm", "A", "270.000"], ["Z", "300 cm", "", ""]];
  return (
    <section className="absolute top-[111px] left-[803px] border-r-2 border-b-2 border-[#a8a8a8] bg-[#f0f0f0] p-[2px] text-[#222]">
      <header className="flex h-[12px] items-center justify-between bg-[#9c9f9c] px-px font-bold text-[#444]">
        <span>Koordinat Kutusu</span>
        <button aria-label="Kapat"><svg viewBox="0 0 8 8" className="size-[6px]"><path d="M1 1l6 6M7 1L1 7" stroke="#444" /></svg></button>
      </header>
      <div className="mt-px grid grid-cols-[17px_38px_16px_38px] gap-y-[2px]">
        {rows.map(([a, v, b, u]) => (
          <React.Fragment key={a}>
            <label className="flex items-center leading-[8px]"><input type="checkbox" className="size-[8px] appearance-none border border-[#444] bg-white" />{a}</label>
            <input aria-label={a} defaultValue={v} disabled={a === "Z"} className={`${field} ${a === "Z" ? "bg-[#ececec]" : "bg-white"}`} />
            {b && <span className="pl-[4px] leading-[11px]">{b}</span>}
            {b && <input aria-label={b} defaultValue={u} className={`${field} bg-white`} />}
          </React.Fragment>
        ))}
      </div>
    </section>
  );
}

function Radio({ name, checked, hot, children }: { name: string; checked?: boolean; hot: string; children: ReactNode }) {
  return (
    <label className="flex h-[12px] items-center gap-px whitespace-nowrap">
      <input type="radio" name={name} defaultChecked={checked} className="size-[9px] shrink-0 appearance-none rounded-full border border-[#333] bg-white checked:bg-[radial-gradient(circle,#222_0_2px,#fff_3px)]" />
      <span><u>{hot}</u>{children}</span>
    </label>
  );
}

function SlopeDialog() {
  const input = "h-[14px] w-[36px] border px-px pb-px text-[7px] leading-[10px] outline-none font-['Roboto',sans-serif]";
  return (
    <div role="dialog" aria-label="Eğim Seçenekleri" className="absolute top-[240px] left-[433px] w-[285px] border border-[#555] bg-[#f0f0f0] text-[#111] shadow-[0_3px_10px_rgba(0,0,0,0.4)]">
      <header className="flex h-[17px] items-center justify-between bg-[#454442] pr-[5px] pl-[4px] text-[#eee]">
        <span>Eğim Seçenekleri</span>
        <button aria-label="Kapat"><svg viewBox="0 0 8 8" className="size-[8px]"><path d="M1 1l6 6M7 1L1 7" stroke="#ddd" /></svg></button>
      </header>
      <form className="flex gap-[5px] pt-[7px] pr-[7px] pb-[7px] pl-[6px]">
        <div className="flex w-[222px] flex-col gap-[2px] font-['Noto_Sans',sans-serif] text-[6px] leading-[8px]">
          <fieldset className="h-[47px] border border-[#dcdcdc]">
            <legend className="ml-[2px] px-[2px] leading-[8px]">Başlangıç noktası :</legend>
            <div className="flex">
              <label htmlFor="startLevel" className="w-[66px] shrink-0 pt-[7px] pl-[5px]"><u>B</u>aşlangıç kotu :</label>
              <div className="pt-[4px]"><input id="startLevel" defaultValue="0 cm" className={`${input} border-[#777] bg-white`} /></div>
              <div className="ml-[14px] flex flex-col">
                <Radio name="start" checked hot="K">at tavanına göre</Radio>
                <Radio name="start" hot="Ka">t tabanına göre</Radio>
                <Radio name="start" hot="G">lobal</Radio>
              </div>
            </div>
          </fieldset>
          <fieldset className="h-[63px] border border-[#dcdcdc]">
            <legend className="ml-[2px] px-[2px] leading-[8px]">Bitiş noktası :</legend>
            <div className="grid grid-cols-[128px_36px_1fr] items-center gap-y-[2px] pt-[4px] pl-[5px]">
              <Radio name="end" checked hot="B">itiş kotu = başlangıç kotu +</Radio>
              <input aria-label="Bitiş kotu" defaultValue="100 cm" autoFocus className={`${input} border-[#0a78d6] bg-white`} />
              <span />
              <Radio name="end" hot="A">çı :</Radio>
              <input aria-label="Açı" disabled defaultValue="10" className={`${input} border-[#ccc] text-[#888]`} />
              <span className="pl-[2px]">°</span>
              <Radio name="end" hot="O">ran :</Radio>
              <input aria-label="Oran" disabled defaultValue="20" className={`${input} border-[#ccc] text-[#888]`} />
              <span className="pl-[2px]">%</span>
            </div>
          </fieldset>
        </div>
        <div className="flex flex-1 flex-col gap-[3px] pt-[4px]">
          <button type="button" className="h-[13px] border-2 border-[#0a78d6] bg-[#e1e1e1] pt-px leading-[8px]">Tamam</button>
          <button type="button" className="h-[13px] border border-[#adadad] bg-[#e1e1e1] pt-px leading-[10px]">İptal</button>
        </div>
      </form>
    </div>
  );
}

export default function App() {
  return (
    <div className="relative flex h-screen flex-col overflow-hidden bg-[#515151] font-['Roboto',sans-serif] text-[7px] leading-[8px]">
      <TitleBar />
      <TabBar />
      <Ribbon />
      <div className="absolute top-0 left-px flex size-[24px] items-center justify-center rounded-full border border-[#999] bg-[radial-gradient(circle_at_50%_30%,#ffffff,#d4d4d4_60%,#8a8a8a)] text-[6px] font-bold">
        <span className="text-[#444]">ide</span><span className="text-[#d8232a]">CAD</span>
      </div>
      <div className="mt-[2px] flex min-h-0 flex-1">
        <Toolbar />
        <div className="flex min-w-0 flex-1 flex-col">
          <main className="grid min-h-0 flex-1 grid-cols-[569fr_2px_565fr]">
            <PlanView />
            <div className="bg-[#999]" />
            <PerspectiveView />
          </main>
          <pre className="mt-[3px] h-[36px] bg-[#f0f0f0] font-['Roboto',sans-serif] text-[#222]">{"Komut : undo/u\nEğimli döşeme geri alındı.\nKomut :\n (Seçilenler : 1)"}</pre>
        </div>
      </div>
      <footer className="flex h-[12px] shrink-0 items-center bg-linear-to-b from-[#434b58] to-[#222427] pt-[3px] pl-[19px] text-[#eee]">
        <span className="w-[151px]">D01 d=12 cm G=450 kgf/m² Q=200 kgf/m²</span>
        <span className="flex-1 border-l border-[#666] pl-[2px]">Eğim yönünü tanımlamak için ikinci noktayı verin.</span>
        <span className="w-[48px] border-l border-[#555] pl-px">kgf / m</span>
        <span className="w-[46px] border-l border-[#555] pl-px">1 : 50</span>
        <span className="w-[43px] border-l border-[#555] pl-px">% 57</span>
      </footer>
      <Coordinates />
      <SlopeDialog />
    </div>
  );
}
